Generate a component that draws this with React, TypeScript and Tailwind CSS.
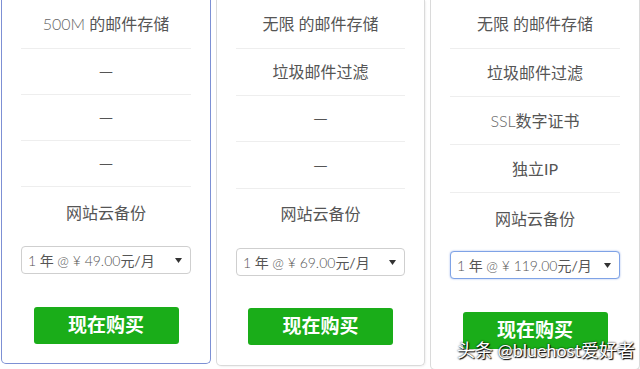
import React from "react";

type Feature = { latin?: string; text: string };

interface Plan {
  id: string;
  features: Feature[];
  price: string;
  active?: boolean;
  focused?: boolean;
  rowClasses: string[];
  selectClass: string;
  buttonClass: string;
  cardClass: string;
}

const FONT = "font-['Lato','Noto_Sans_CJK_SC',sans-serif]";

const PLANS: Plan[] = [
  {
    id: "basic",
    features: [
      { latin: "500M ", text: "的邮件存储" },
      { text: "—" },
      { text: "—" },
      { text: "—" },
      { text: "网站云备份" },
    ],
    price: "49.00",
    active: true,
    rowClasses: ["h-[48px]", "h-[46px]", "h-[46px]", "h-[46px]", "h-[52px]"],
    selectClass: "mt-[8px]",
    buttonClass: "mt-[33px]",
    cardClass: "w-[210px] pb-[19px] border-[#7d90d4] rounded-b-[5px]",
  },
  {
    id: "plus",
    features: [
      { text: "无限 的邮件存储" },
      { text: "垃圾邮件过滤" },
      { text: "—" },
      { text: "—" },
      { text: "网站云备份" },
    ],
    price: "69.00",
    rowClasses: ["h-[48px]", "h-[47px]", "h-[46px]", "h-[47px]", "h-[50px]"],
    selectClass: "mt-[10px]",
    buttonClass: "mt-[32px]",
    cardClass: "w-[209px] pb-[20px] border-[#dadada] rounded-b-[5px] shadow-[1px_1px_2px_rgba(0,0,0,0.06)]",
  },
  {
    id: "prime",
    features: [
      { text: "无限 的邮件存储" },
      { text: "垃圾邮件过滤" },
      { latin: "SSL", text: "数字证书" },
      { text: "独立IP" },
      { text: "网站云备份" },
    ],
    price: "119.00",
    focused: true,
    rowClasses: ["h-[48px]", "h-[48px]", "h-[48px]", "h-[48px]", "h-[52px]"],
    selectClass: "mt-[7px]",
    buttonClass: "mt-[33px]",
    cardClass: "w-[210px] pb-[20px] border-[#dadada] rounded-b-[5px] shadow-[1px_1px_2px_rgba(0,0,0,0.06)]",
  },
];

function CaretDown() {
  return (
    <svg width="7" height="5" viewBox="0 0 7 5" className="shrink-0">
      <path d="M0 0h7L3.5 5z" fill="#333" />
    </svg>
  );
}

function PriceSelect({ price, focused }: { price: string; focused?: boolean }) {
  return (
    <div
      className={`flex h-[28px] items-center justify-between rounded-[4px] border bg-white pl-[6px] pr-[8px] text-[14px] text-[#555] ${
        focused
          ? "border-[#7fa3e6] shadow-[0_0_2px_rgba(90,130,220,0.6)]"
          : "border-[#cfcfcf]"
      }`}
    >
      <span>
        <span className="font-light">1</span> 年 <span className="font-light">@ ¥ {price}</span>元/月
      </span>
      <CaretDown />
    </div>
  );
}

function FeatureText({ f }: { f: Feature }) {
  if (f.text === "—") {
    return <span className="font-['DejaVu_Sans',sans-serif] text-[14px] text-[#555]">—</span>;
  }
  return (
    <span>
      {f.latin && <span className="whitespace-pre font-light text-[#666]">{f.latin}</span>}
      {f.text}
    </span>
  );
}

function PlanCard({ plan }: { plan: Plan }) {
  return (
    <div className={`flex flex-col border-x border-b bg-white px-[19px] ${plan.cardClass}`}>
      <ul>
        {plan.features.map((f, i) => (
          <li
            key={i}
            className={`flex items-center justify-center text-[16px] text-[#555] ${plan.rowClasses[i]} ${
              i > 0 ? "border-t border-[#eeeeee]" : ""
            }`}
          >
            <FeatureText f={f} />
          </li>
        ))}
      </ul>

      <div className={plan.selectClass}>
        <PriceSelect price={plan.price} focused={plan.focused} />
      </div>

      <button
        className={`mx-auto flex h-[37px] w-[145px] items-center justify-center rounded-[3px] bg-[#1aad19] text-[19px] font-bold text-white ${plan.buttonClass}`}
      >
        现在购买
      </button>
    </div>
  );
}

export default function App() {
  return (
    <div className={`relative h-[369px] w-[640px] overflow-hidden bg-white ${FONT}`}>
      <div className="flex items-start gap-[5px] pl-[1px]">
        {PLANS.map((p) => (
          <PlanCard key={p.id} plan={p} />
        ))}
      </div>

      {/* watermark */}
      <div className="absolute left-[457px] top-[338px] text-[18px] leading-[24px] text-white [text-shadow:0_0_2px_#000,1px_1px_1px_#000]">
        头条 @bluehost爱好者
      </div>
    </div>
  );
}
